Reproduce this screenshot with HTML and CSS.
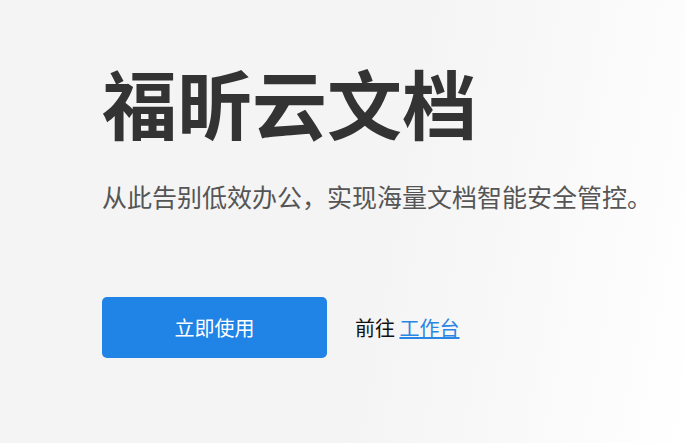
FILE: index.html
```html
<!DOCTYPE html>
<html lang="zh-CN">
<head>
<meta charset="utf-8">
<title>福昕云文档</title>
<link rel="stylesheet" href="styles.css">
</head>
<body>
<main class="hero">
  <h1 class="hero-title">福昕云文档</h1>
  <p class="hero-sub">从此告别低效办公，实现海量文档智能安全管控。</p>
  <div class="hero-actions">
    <a class="btn-primary" href="#">立即使用</a>
    <span class="goto">前往 <a class="goto-link" href="#">工作台</a></span>
  </div>
</main>
</body>
</html>
```

FILE: styles.css
```css
html, body {
  margin: 0;
  padding: 0;
}
body {
  width: 685px;
  height: 443px;
  overflow: hidden;
  background: linear-gradient(100deg, #f4f4f4 0%, #f4f4f4 55%, #fbfbfb 85%, #ffffff 100%);
  font-family: "Noto Sans CJK SC", "Noto Sans", sans-serif;
}
.hero {
  padding: 57px 0 0 102px;
}
.hero-title {
  margin: 0;
  font-size: 75px;
  line-height: 1.2;
  font-weight: 700;
  color: #333333;
  letter-spacing: 0;
}
.hero-sub {
  margin: 31px 0 0;
  font-size: 25px;
  line-height: 1.5;
  color: #555555;
  font-weight: 400;
}
.hero-actions {
  margin-top: 81px;
  display: flex;
  align-items: center;
  gap: 28px;
}
.btn-primary {
  display: flex;
  align-items: center;
  justify-content: center;
  width: 225px;
  height: 61px;
  border-radius: 5px;
  background: #2083e6;
  color: #ffffff;
  font-size: 20px;
  text-decoration: none;
}
.goto {
  font-size: 20px;
  color: #111111;
}
.goto-link {
  color: #2b85e4;
  text-decoration: underline;
}
```
